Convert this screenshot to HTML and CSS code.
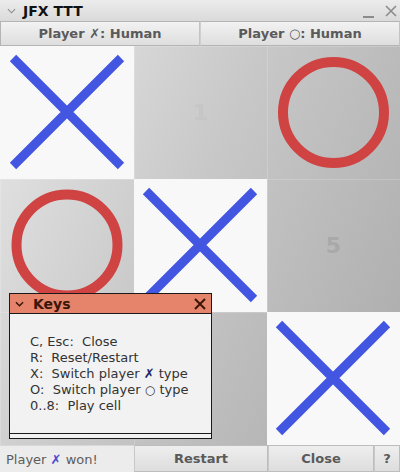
FILE: index.html
```html
<!DOCTYPE html>
<html>
<head>
<meta charset="utf-8">
<link rel="stylesheet" href="styles.css">
</head>
<body>
<div class="app">
  <div class="titlebar">
    <svg class="chev" viewBox="0 0 10 6"><path d="M1 1 L5 5 L9 1"/></svg>
    <span class="title">JFX TTT</span>
    <span class="spacer"></span>
    <span class="min"></span>
    <svg class="close" viewBox="0 0 12 12"><path d="M1 1 L11 11 M11 1 L1 11"/></svg>
  </div>
  <div class="players">
    <div class="pbtn"><span>Player <span class="sym">✗</span>: Human</span></div>
    <div class="pbtn"><span>Player <span class="sym">○</span>: Human</span></div>
  </div>
  <div class="board">
    <div class="cell won">
      <svg viewBox="0 0 134 133" class="mark"><path d="M13 12 L121 120 M121 12 L13 120" class="x"/></svg>
    </div>
    <div class="cell"><span class="num">1</span></div>
    <div class="cell">
      <svg viewBox="0 0 133 133" class="mark"><circle cx="66.5" cy="66.5" r="50.5" class="o"/></svg>
    </div>
    <div class="cell">
      <svg viewBox="0 0 134 133" class="mark"><circle cx="67" cy="66" r="50.5" class="o"/></svg>
    </div>
    <div class="cell won">
      <svg viewBox="0 0 133 133" class="mark"><path d="M12 12 L120 120 M120 12 L12 120" class="x"/></svg>
    </div>
    <div class="cell"><span class="num dark">5</span></div>
    <div class="cell"></div>
    <div class="cell"></div>
    <div class="cell won">
      <svg viewBox="0 0 133 133" class="mark"><path d="M12 12 L120 120 M120 12 L12 120" class="x"/></svg>
    </div>
  </div>
  <div class="bottom">
    <div class="status"><span>Player <span class="sym">✗</span> won!</span></div>
    <div class="bbtn">Restart</div>
    <div class="bbtn">Close</div>
    <div class="bbtn">?</div>
  </div>

  <div class="dialog">
    <div class="dtitle">
      <svg class="dchev" viewBox="0 0 10 6"><path d="M1 1 L5 5 L9 1"/></svg>
      <span class="dname">Keys</span>
      <span class="spacer"></span>
      <svg class="dclose" viewBox="0 0 12 12"><path d="M1 1 L11 11 M11 1 L1 11"/></svg>
    </div>
    <div class="dbody">
      <div>C, Esc:&nbsp; Close</div>
      <div>R:&nbsp; Reset/Restart</div>
      <div>X:&nbsp; Switch player <b class="bx">✗</b> type</div>
      <div>O:&nbsp; Switch player <span class="bo">○</span> type</div>
      <div>0..8:&nbsp; Play cell</div>
    </div>
    <div class="dfoot"></div>
  </div>
</div>
</body>
</html>
```

FILE: styles.css
```css
html, body {
  margin: 0;
  padding: 0;
}
body {
  width: 400px;
  height: 472px;
  overflow: hidden;
  font-family: "DejaVu Sans", sans-serif;
  background: #e6e6e6;
}
.app {
  position: relative;
  width: 400px;
  height: 472px;
  display: flex;
  flex-direction: column;
}
.titlebar {
  height: 21px;
  display: flex;
  align-items: center;
  background: linear-gradient(#ececec, #dadada);
  box-sizing: border-box;
  padding: 0 3px 0 7px;
}
.chev {
  width: 9px;
  height: 6px;
  margin-right: 7px;
  margin-top: 1px;
  fill: none;
  stroke: #8a8a8a;
  stroke-width: 1.2;
}
.title {
  font-weight: bold;
  font-size: 14px;
  color: #111;
}
.spacer { flex: 1; }
.min {
  width: 11px;
  height: 2px;
  background: #8c8c8c;
  margin-top: 12px;
  margin-right: 11px;
}
.close {
  width: 12px;
  height: 12px;
  fill: none;
  stroke: #8c8c8c;
  stroke-width: 1.6;
}
.players {
  height: 25px;
  display: grid;
  grid-template-columns: 200px 200px;
}
.pbtn {
  box-sizing: border-box;
  border: 1px solid #b4b4b4;
  border-right-color: #c4c4c4;
  background: linear-gradient(#f2f2f2, #dedede);
  display: flex;
  align-items: center;
  justify-content: center;
  font-weight: bold;
  font-size: 13px;
  color: #5a5a5a;
}
.pbtn + .pbtn { border-left-color: #cfcfcf; }
.sym { font-weight: normal; }
.board {
  height: 399px;
  display: grid;
  grid-template-columns: 134px 133px 133px;
  grid-template-rows: 133px 133px 133px;
  background: linear-gradient(115deg, #e6e6e6 0%, #c8c8c8 45%, #aaaaaa 100%);
}
.cell {
  position: relative;
  display: flex;
  align-items: center;
  justify-content: center;
  box-shadow: inset 1px 1px 0 rgba(255,255,255,0.18);
}
.cell.won {
  background: #f8f8f8;
  box-shadow: none;
}
.mark {
  width: 100%;
  height: 100%;
  display: block;
}
.x {
  stroke: #4256e2;
  stroke-width: 9;
  fill: none;
}
.o {
  stroke: #cf4343;
  stroke-width: 10;
  fill: none;
}
.num {
  font-weight: bold;
  font-size: 22px;
  color: #c6c6c6;
}
.num.dark { color: #a9a9a9; }
.bottom {
  height: 27px;
  display: grid;
  grid-template-columns: 134px 134px 106px 26px;
}
.status {
  display: flex;
  align-items: center;
  padding-left: 6px;
  font-size: 13px;
  color: #5c5c5c;
  background: #ececec;
  border-top: 1px solid #d8d8d8;
}
.status .sym { color: #4a4ad0; }
.bbtn {
  box-sizing: border-box;
  border: 1px solid #bdbdbd;
  border-left-color: #c8c8c8;
  background: linear-gradient(#eeeeee, #dddddd);
  display: flex;
  align-items: center;
  justify-content: center;
  font-weight: bold;
  font-size: 13px;
  color: #5a5a5a;
}
.dialog {
  position: absolute;
  left: 9px;
  top: 293px;
  width: 203px;
  height: 146px;
  box-sizing: border-box;
  border: 1px solid #1a1a1a;
  background: #f2f2f2;
  display: flex;
  flex-direction: column;
}
.dtitle {
  height: 19px;
  background: #e5836b;
  border-bottom: 1px solid #1a1a1a;
  display: flex;
  align-items: center;
  padding: 0 5px 0 5px;
  color: #3a1608;
}
.dchev {
  width: 9px;
  height: 6px;
  margin-right: 9px;
  fill: none;
  stroke: #3a1608;
  stroke-width: 1.6;
}
.dname {
  font-weight: bold;
  font-size: 14px;
}
.dclose {
  width: 12px;
  height: 12px;
  fill: none;
  stroke: #3a1608;
  stroke-width: 2;
}
.dbody {
  flex: 1;
  padding: 20px 0 0 20px;
  font-size: 13px;
  line-height: 16px;
  color: #333;
  border-bottom: 1px solid #1a1a1a;
}
.bx { color: #222266; }
.bo { font-size: 12px; }
.dfoot {
  height: 4px;
}
```
